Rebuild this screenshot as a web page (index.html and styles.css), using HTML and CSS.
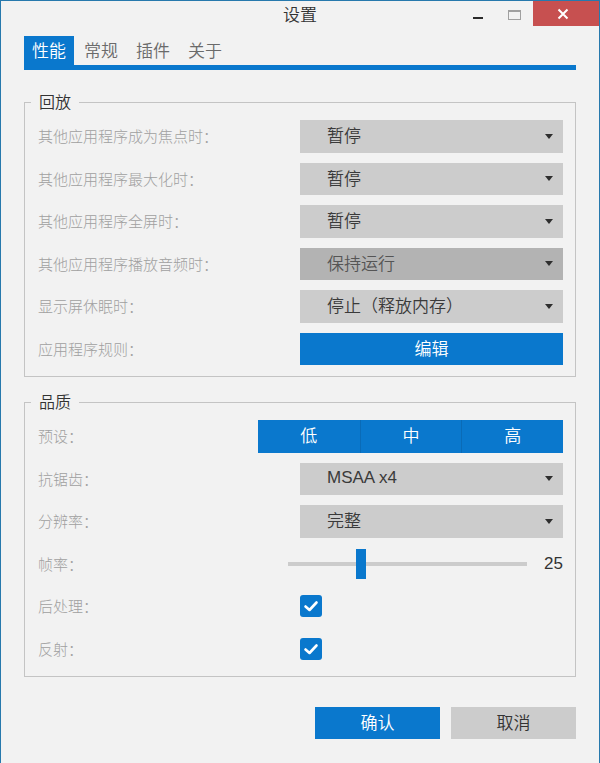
FILE: index.html
```html
<!DOCTYPE html>
<html lang="zh-CN">
<head>
<meta charset="utf-8">
<title>设置</title>
<link rel="stylesheet" href="styles.css">
</head>
<body>
<div class="window">
  <div class="titlebar">
    <div class="title">设置</div>
    <div class="controls">
      <svg class="ic-min" width="10" height="25" viewBox="0 0 10 25"><rect x="0" y="16" width="10" height="2" fill="#2b2b2b"/></svg>
      <svg class="ic-max" width="13" height="25" viewBox="0 0 13 25"><rect x="0.5" y="9.5" width="12" height="9" fill="none" stroke="#a0a0a0"/><rect x="0" y="9" width="13" height="2" fill="#a0a0a0"/></svg>
      <div class="close"><svg width="12" height="12" viewBox="0 0 12 12"><path d="M1.5 1.5 L10.5 10.5 M10.5 1.5 L1.5 10.5" stroke="#fff" stroke-width="2"/></svg></div>
    </div>
  </div>

  <div class="tabs">
    <div class="tab active">性能</div>
    <div class="tab">常规</div>
    <div class="tab">插件</div>
    <div class="tab">关于</div>
  </div>

  <fieldset class="group">
    <legend>回放</legend>
    <div class="rows">
      <div class="row"><span class="label">其他应用程序成为焦点时：</span><div class="select"><span>暂停</span><i class="caret"></i></div></div>
      <div class="row"><span class="label">其他应用程序最大化时：</span><div class="select"><span>暂停</span><i class="caret"></i></div></div>
      <div class="row"><span class="label">其他应用程序全屏时：</span><div class="select"><span>暂停</span><i class="caret"></i></div></div>
      <div class="row"><span class="label">其他应用程序播放音频时：</span><div class="select hover"><span>保持运行</span><i class="caret"></i></div></div>
      <div class="row"><span class="label">显示屏休眠时：</span><div class="select"><span>停止（释放内存）</span><i class="caret"></i></div></div>
      <div class="row"><span class="label">应用程序规则：</span><div class="btn-edit">编辑</div></div>
    </div>
  </fieldset>

  <fieldset class="group group2">
    <legend>品质</legend>
    <div class="rows">
      <div class="row"><span class="label">预设：</span>
        <div class="segmented"><span>低</span><span>中</span><span>高</span></div>
      </div>
      <div class="row"><span class="label">抗锯齿：</span><div class="select"><span class="latin">MSAA x4</span><i class="caret"></i></div></div>
      <div class="row"><span class="label">分辨率：</span><div class="select"><span>完整</span><i class="caret"></i></div></div>
      <div class="row"><span class="label">帧率：</span>
        <div class="slider">
          <div class="track"><div class="thumb"></div></div>
          <span class="value">25</span>
        </div>
      </div>
      <div class="row"><span class="label">后处理：</span>
        <div class="check-wrap"><span class="checkbox"><svg width="22" height="22" viewBox="0 0 22 22"><path d="M5.5 11.5 L9.5 15 L16.5 7.5" fill="none" stroke="#fff" stroke-width="2.6" stroke-linecap="round" stroke-linejoin="round"/></svg></span></div>
      </div>
      <div class="row"><span class="label">反射：</span>
        <div class="check-wrap"><span class="checkbox"><svg width="22" height="22" viewBox="0 0 22 22"><path d="M5.5 11.5 L9.5 15 L16.5 7.5" fill="none" stroke="#fff" stroke-width="2.6" stroke-linecap="round" stroke-linejoin="round"/></svg></span></div>
      </div>
    </div>
  </fieldset>

  <div class="actions">
    <div class="btn primary">确认</div>
    <div class="btn secondary">取消</div>
  </div>
</div>
</body>
</html>
```

FILE: styles.css
```css
* { box-sizing: border-box; }

html, body {
  margin: 0;
  padding: 0;
  background: #f2f2f2;
}

body {
  font-family: "Noto Sans CJK SC", "Liberation Sans", sans-serif;
  color: #333;
}

.window {
  width: 600px;
  height: 763px;
  background: #f2f2f2;
  border-top: 1px solid #2779ad;
  border-left: 1px solid #2779ad;
  border-right: 1px solid #2779ad;
  overflow: hidden;
}

/* title bar */
.titlebar {
  height: 25px;
  display: grid;
  grid-template-columns: 1fr auto 1fr;
}
.title {
  grid-column: 2;
  font-size: 17px;
  line-height: 25px;
  color: #333;
  font-weight: 350;
}
.controls {
  grid-column: 3;
  justify-self: end;
  display: flex;
  align-items: stretch;
}
.ic-min { margin-right: 25px; }
.ic-max { margin-right: 12px; }
.close {
  width: 66px;
  height: 25px;
  background: #c75050;
  display: flex;
  align-items: center;
  justify-content: center;
  padding-right: 6px;
}

/* tabs */
.tabs {
  display: flex;
  margin: 10px 23px 0;
  border-bottom: 5px solid #0a78cd;
}
.tab {
  font-size: 17px;
  line-height: 27px;
  height: 29px;
  padding: 0 8px 2px;
  margin-right: 2px;
  color: #6a6a6a;
  font-weight: 350;
}
.tab.active {
  background: #0a78cd;
  color: #fff;
}

/* groups */
.group {
  margin: 21px 23px 0;
  padding: 7px 12px 11px 13px;
  border: 1px solid #c4c4c4;
  min-width: 0;
}
.group2 { margin-top: 14px; }
.group legend {
  margin-left: -7px;
  padding: 0 8px 1px;
  font-size: 16px;
  line-height: 21px;
  color: #333;
  font-weight: 350;
}

.rows {
  display: flex;
  flex-direction: column;
  gap: 10px;
}
.row {
  height: 32.5px;
  display: flex;
  align-items: center;
}
.label {
  flex: 1;
  font-size: 15px;
  color: #a0a0a0;
  font-weight: 300;
  white-space: nowrap;
  padding-bottom: 1px;
}

.select {
  width: 263px;
  height: 100%;
  background: #cccccc;
  display: flex;
  align-items: center;
  padding-left: 27px;
  padding-right: 10px;
  font-size: 17px;
  color: #3a3a3a;
  font-weight: 350;
}
.select span {
  padding-bottom: 3px;
}
.select.hover {
  background: #b3b3b3;
  color: #555;
}
.select .latin {
  font-family: "Liberation Sans", sans-serif;
  font-weight: 400;
  padding-bottom: 1px;
}
.caret {
  margin-left: auto;
  width: 0;
  height: 0;
  border-left: 4.5px solid transparent;
  border-right: 4.5px solid transparent;
  border-top: 5px solid #2e2e2e;
}

.btn-edit {
  width: 263px;
  height: 100%;
  background: #0a78cd;
  color: #fff;
  font-size: 17px;
  font-weight: 350;
  display: flex;
  align-items: center;
  justify-content: center;
  padding-bottom: 3px;
}

.segmented {
  width: 305px;
  height: 100%;
  display: grid;
  grid-template-columns: 1fr 1fr 1fr;
  background: #0a78cd;
}
.segmented span {
  display: flex;
  align-items: center;
  justify-content: center;
  color: #fff;
  font-size: 17px;
  font-weight: 350;
  padding-bottom: 3px;
}
.segmented span + span {
  border-left: 1px solid #0a6bb7;
}

.slider {
  width: 275px;
  display: flex;
  align-items: center;
}
.track {
  width: 239px;
  height: 4px;
  background: #cccccc;
  position: relative;
}
.thumb {
  position: absolute;
  left: 68px;
  top: -13px;
  width: 10px;
  height: 30px;
  background: #0a78cd;
}
.value {
  flex: 1;
  text-align: right;
  font-family: "Liberation Sans", sans-serif;
  font-size: 17px;
  color: #333;
}

.check-wrap {
  width: 263px;
  display: flex;
}
.checkbox {
  width: 22px;
  height: 22px;
  border-radius: 3px;
  background: #0a78cd;
  display: flex;
}

/* bottom buttons */
.actions {
  display: flex;
  justify-content: flex-end;
  gap: 11px;
  margin: 30px 23px 0;
}
.btn {
  width: 125px;
  height: 32px;
  display: flex;
  align-items: center;
  justify-content: center;
  font-size: 17px;
  font-weight: 350;
  padding-bottom: 3px;
}
.btn.primary {
  background: #0a78cd;
  color: #fff;
}
.btn.secondary {
  background: #cccccc;
  color: #333;
}
```
